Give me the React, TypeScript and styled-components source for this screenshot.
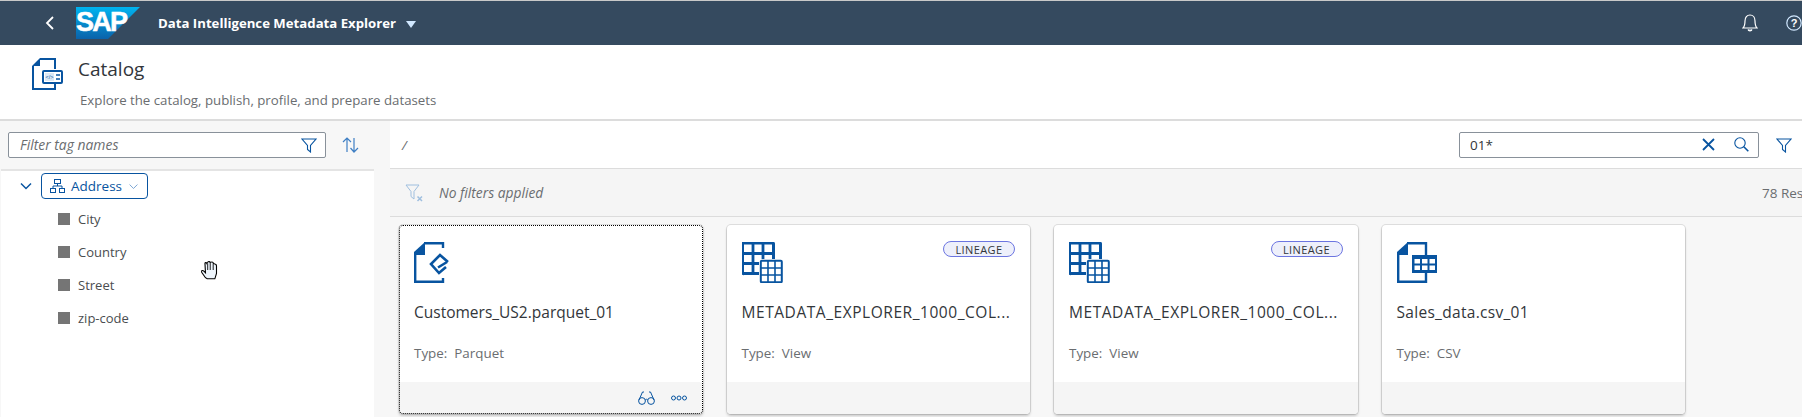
import React from 'react'
import styled, { createGlobalStyle } from 'styled-components'

const blue = '#0854a0'

const GlobalStyle = createGlobalStyle`
  html, body {
    margin: 0;
    padding: 0;
    background: #f7f7f7;
    overflow: hidden;
  }
  * {
    box-sizing: border-box;
  }
`

const Viewport = styled.div`
  width: 1802px;
  height: 417px;
  overflow: hidden;
  font-family: 'Open Sans', 'Noto Sans', sans-serif;
  color: #32363a;
  border-top: 1px solid #c9c9c9;
`
const Page = styled.div`
  width: 1880px;
  height: 416px;
  display: flex;
  flex-direction: column;
`
const ShellBar = styled.header`
  height: 44px;
  flex: none;
  background: #354a5f;
  display: flex;
  align-items: center;
  padding: 0 78px 0 43px;
  color: #fff;
`
const LogoSlot = styled.div`
  margin-left: 19px;
  width: 64px;
  height: 32px;
  flex: none;
  svg {
    display: block;
  }
`
const AppTitle = styled.div`
  margin-left: 18px;
  font-size: 13.2px;
  font-weight: 700;
  white-space: nowrap;
`
const Caret = styled.span`
  margin-left: 10px;
  margin-top: 2px;
  width: 0;
  height: 0;
  border-left: 5.5px solid transparent;
  border-right: 5.5px solid transparent;
  border-top: 7px solid #d1e8ff;
`
const ShellActions = styled.div`
  margin-left: auto;
  display: flex;
  align-items: center;
  gap: 28px;
`
const PageHeader = styled.section`
  height: 76px;
  flex: none;
  background: #fff;
  border-bottom: 2px solid #dcdcdc;
  display: flex;
  padding: 13px 0 0 32px;
`
const HeaderText = styled.div`
  margin-left: 15px;
  margin-top: -1px;
`
const PageTitle = styled.div`
  font-size: 19px;
  line-height: 24px;
  color: #32363a;
`
const PageSubtitle = styled.div`
  margin: 10px 0 0 2px;
  font-size: 13.25px;
  line-height: 18px;
  color: #6a6d70;
`
const Body = styled.div`
  flex: 1;
  min-height: 0;
  display: flex;
`
const Sidebar = styled.aside`
  width: 390px;
  flex: none;
  display: flex;
  flex-direction: column;
  background: #f7f7f7;
`
const SideTools = styled.div`
  height: 48px;
  flex: none;
  display: flex;
  align-items: center;
  padding: 0 0 0 8px;
`
const FieldBox = styled.div<{ $width: number }>`
  width: ${p => p.$width}px;
  height: 26px;
  background: #fff;
  border: 1px solid #89919a;
  border-radius: 2px;
  display: flex;
  align-items: center;
  font-size: 13.5px;
`
const Placeholder = styled.span`
  margin: -2px 0 0 11px;
  font-size: 13.9px;
  font-style: italic;
  color: #6a6d70;
  flex: 1;
`
const FieldValue = styled.span`
  margin-left: 10px;
  color: #32363a;
  flex: 1;
`
const FieldIcon = styled.span`
  display: flex;
  margin-right: 8px;
`
const TreePanel = styled.div`
  flex: 1;
  width: 373px;
  margin-left: 1px;
  background: #fff;
  border-top: 2px solid #e4e4e4;
  padding-top: 2px;
`
const TreeRoot = styled.div`
  display: flex;
  align-items: center;
  padding-left: 18px;
  gap: 8px;
  height: 26px;
`
const TagButton = styled.div`
  width: 107px;
  height: 26px;
  border: 1px solid ${blue};
  border-radius: 4px;
  display: flex;
  align-items: center;
  gap: 6px;
  padding-left: 8px;
  font-size: 13.5px;
  color: ${blue};
`
const TreeList = styled.ul`
  list-style: none;
  margin: 3px 0 0;
  padding: 0 0 0 57px;
`
const TreeItem = styled.li`
  height: 33px;
  display: flex;
  align-items: center;
  gap: 8px;
  font-size: 13px;
  color: #4a4d50;
`
const Swatch = styled.span`
  width: 12px;
  height: 12px;
  background: #757575;
`
const Main = styled.main`
  flex: 1;
  min-width: 0;
  display: flex;
  flex-direction: column;
`
const TopBar = styled.div`
  height: 48px;
  flex: none;
  background: #fff;
  border-bottom: 1px solid #dcdcdc;
  display: flex;
  align-items: center;
  padding-left: 12px;
  font-size: 13.5px;
  color: #6a6d70;
`
const Crumb = styled.span`
  flex: none;
  width: 1057px;
  font-style: italic;
`
const FilterAction = styled.span`
  margin-left: 17px;
  display: flex;
`
const FilterBar = styled.div`
  height: 48px;
  flex: none;
  border-bottom: 1px solid #dcdcdc;
  background: #f5f5f5;
  display: flex;
  align-items: center;
  padding-left: 15px;
  font-size: 13.5px;
  color: #6a6d70;
`
const FilterNote = styled.span`
  margin-left: 16px;
  width: 1323px;
  flex: none;
  font-size: 13.8px;
  font-style: italic;
`
const CardRow = styled.div`
  display: flex;
  gap: 24px;
  padding: 8px 0 0 9px;
`
const Card = styled.article<{ $focused?: boolean }>`
  width: 303.5px;
  height: 189px;
  flex: none;
  background: #fff;
  border-radius: 4px;
  box-shadow: 0 0 0 1px rgba(0, 0, 0, 0.1), 0 2px 3px rgba(0, 0, 0, 0.2);
  display: flex;
  flex-direction: column;
  overflow: hidden;
  outline: ${p => (p.$focused ? '1px dotted #000' : 'none')};
  outline-offset: ${p => (p.$focused ? '-1px' : '0')};
`
const CardBody = styled.div`
  flex: 1;
  padding: 17px 15px 0;
  position: relative;
`
const IconSlot = styled.div`
  height: 41px;
  svg {
    display: block;
  }
`
const Badge = styled.span`
  position: absolute;
  top: 16px;
  right: 15px;
  height: 16px;
  width: 72px;
  border: 1px solid #6c75e0;
  border-radius: 8px;
  background: #eef0fb;
  display: flex;
  align-items: center;
  justify-content: center;
  font-size: 11px;
  letter-spacing: 0.4px;
  color: #32363a;
`
const CardName = styled.div<{ $tracking: number }>`
  margin-top: 19px;
  font-size: 15.5px;
  line-height: 20px;
  letter-spacing: ${p => p.$tracking}px;
  white-space: nowrap;
  color: #32363a;
`
const CardType = styled.div`
  margin-top: 22px;
  font-size: 13.4px;
  line-height: 18px;
  color: #6a6d70;
  white-space: pre;
`
const CardFooter = styled.div`
  height: 32px;
  flex: none;
  background: #f5f5f5;
  display: flex;
  align-items: center;
  justify-content: flex-end;
  gap: 16px;
  padding-right: 16px;
`
const HandCursor = styled.svg`
  position: absolute;
  left: 200px;
  top: 259px;
`

const Chevron = ({ dir, color, size = 14, width = 1.5 }: { dir: 'left' | 'down'; color: string; size?: number; width?: number }) => (
  <svg width={size} height={size} viewBox="0 0 14 14" fill="none" stroke={color} strokeWidth={width}>
    <path d={dir === 'left' ? 'M10 1 L4 7 L10 13' : 'M2 4.5 L7 9.5 L12 4.5'} />
  </svg>
)

const FunnelIcon = ({ size = 16 }: { size?: number }) => (
  <svg width={size} height={size} viewBox="0 0 16 16" fill="none" stroke={blue} strokeWidth="1.1">
    <path d="M1 2 H15 L9.5 8.5 V15 L6.5 12.5 V8.5 Z" />
  </svg>
)

const BellIcon = () => (
  <svg width="16" height="18" viewBox="0 0 16 18" fill="none" stroke="#fff" strokeWidth="1.2">
    <path d="M1 14 C3 12 3 10 3 7 C3 3.5 5 1 8 1 C11 1 13 3.5 13 7 C13 10 13 12 15 14 Z" />
    <path d="M6 15.5 C6.5 17.3 9.5 17.3 10 15.5" fill="#d1e8ff" />
  </svg>
)

const HelpIcon = () => (
  <svg width="16" height="16" viewBox="0 0 16 16" fill="none">
    <circle cx="8" cy="8" r="7.2" stroke="#d1e8ff" strokeWidth="1.2" />
    <text x="8" y="12" textAnchor="middle" fontSize="11" fontWeight="700" fill="#fff" fontFamily="'Liberation Sans', sans-serif">?</text>
  </svg>
)

const SapLogo = () => (
  <svg width="64" height="32" viewBox="0 0 64 32">
    <defs>
      <linearGradient id="sapFill" x1="0" y1="0" x2="0" y2="1">
        <stop offset="0" stopColor="#00b4f0" />
        <stop offset="1" stopColor="#0a62aa" />
      </linearGradient>
    </defs>
    <polygon points="0,0 64,0 32,32 0,32" fill="url(#sapFill)" />
    <text x="0" y="24" fontSize="27" fontWeight="700" fill="#fff" letterSpacing="-1.8" fontFamily="'Liberation Sans', sans-serif" stroke="#fff" strokeWidth="0.5">SAP</text>
  </svg>
)

const CatalogIcon = () => (
  <svg width="31" height="33" viewBox="0 0 31 33" style={{ flex: 'none' }}>
    <path d="M8 1 H23 V11 M23 26 V31 H1 V8" fill="none" stroke={blue} strokeWidth="2" />
    <path d="M8 0 L0 8 H8 Z" fill={blue} />
    <rect x="11" y="13" width="19" height="12" rx="1" fill="#fff" stroke={blue} strokeWidth="2" />
    <rect x="13" y="15" width="9" height="8" fill="#dbe8f5" />
    <text x="17.5" y="21" textAnchor="middle" fontSize="5.5" fill={blue} fontFamily="'Liberation Sans', sans-serif">&lt;/&gt;</text>
    <path d="M24 17 H28 M24 21 H28" stroke={blue} strokeWidth="1.6" />
  </svg>
)

const ParquetIcon = () => (
  <svg width="36" height="41" viewBox="0 0 36 41">
    <path d="M10 1.2 H29 V6 M29 36 V39.8 H1.2 V10" fill="none" stroke={blue} strokeWidth="2.4" />
    <path d="M11 0 L0 10 V13 H11 Z" fill={blue} />
    <path d="M34 20 L26 13 L17 22 L25 31 L32 25 M33 20 L24 25.5" fill="none" stroke={blue} strokeWidth="2.6" />
  </svg>
)

const TableIcon = () => (
  <svg width="41" height="41" viewBox="0 0 41 41" fill="none" stroke={blue}>
    <path d="M17 31.5 H2 a1 1 0 0 1 -1.5 -1 V2 a1 1 0 0 1 1.5 -1 H30 a1 1 0 0 1 1.5 1 V17" strokeWidth="3" />
    <path d="M1 11.5 H31 M1 21.5 H17 M11 1 V32 M21 1 V17" strokeWidth="2.8" />
    <rect x="18.8" y="18.8" width="21" height="21.4" rx="1" fill="#fff" strokeWidth="2" />
    <path d="M19 26 H40 M19 33 H40 M26 19 V40 M33 19 V40" strokeWidth="1.6" />
  </svg>
)

const CsvIcon = () => (
  <svg width="41" height="41" viewBox="0 0 41 41">
    <path d="M10 1.2 H29 V13 M29 31 V39.8 H1.2 V10" fill="none" stroke={blue} strokeWidth="2.4" />
    <path d="M11 0 L0 10 V13 H11 Z" fill={blue} />
    <rect x="15" y="13" width="25" height="18" fill={blue} />
    <path d="M17.5 17 h5.5 v4.5 h-5.5 z M25 17 h5.5 v4.5 h-5.5 z M32.5 17 h5.5 v4.5 h-5.5 z M17.5 23.5 h5.5 v4.5 h-5.5 z M25 23.5 h5.5 v4.5 h-5.5 z M32.5 23.5 h5.5 v4.5 h-5.5 z" fill="#fff" />
  </svg>
)

const SortIcon = () => (
  <svg width="17" height="16" viewBox="0 0 17 16" fill="none" stroke="#3f7fc4" strokeWidth="1.2" style={{ marginLeft: 16 }}>
    <path d="M5 15 V1 M1 5 L5 1 L9 5" />
    <path d="M12 1 V15 M8.5 11 L12 15 L16 11" />
  </svg>
)

const HierarchyIcon = () => (
  <svg width="15" height="14" viewBox="0 0 15 14" fill="none" stroke={blue} strokeWidth="1">
    <rect x="4.5" y="0.5" width="6" height="4" />
    <rect x="0.5" y="9.5" width="5" height="4" />
    <rect x="9.5" y="9.5" width="5" height="4" />
    <path d="M7.5 4.5 V7 M3 9.5 V7 H12 V9.5" />
  </svg>
)

const ClearIcon = () => (
  <svg width="13" height="13" viewBox="0 0 13 13" fill="none" stroke={blue} strokeWidth="1.8" style={{ marginRight: 19 }}>
    <path d="M1 1 L12 12 M12 1 L1 12" />
  </svg>
)

const SearchIcon = () => (
  <svg width="15" height="15" viewBox="0 0 15 15" fill="none" stroke={blue} strokeWidth="1.1" style={{ marginRight: 9 }}>
    <circle cx="6" cy="6" r="5.2" />
    <path d="M9.8 9.8 L14.3 14.3" strokeWidth="1.6" />
  </svg>
)

const NoFilterIcon = () => (
  <svg width="18" height="18" viewBox="0 0 18 18" fill="none" stroke="#9fbfdf" strokeWidth="1">
    <path d="M1 1 H14 L9 7.5 V15 L6 12.5 V7.5 Z" />
    <path d="M12.5 12.5 L17 17 M17 12.5 L12.5 17" strokeWidth="1.5" />
  </svg>
)

const GlassesIcon = () => (
  <svg width="17" height="14" viewBox="0 0 17 14" fill="none" stroke={blue} strokeWidth="1">
    <circle cx="4" cy="10" r="3.4" />
    <circle cx="13" cy="10" r="3.4" />
    <path d="M7.2 9 C8 8 9 8 9.8 9 M1 9 L4.5 1 H6 M16 9 L12.5 1 H11" />
  </svg>
)

const MoreIcon = () => (
  <svg width="16" height="6" viewBox="0 0 16 6" fill="none" stroke={blue} strokeWidth="1">
    <circle cx="2.5" cy="3" r="2" />
    <circle cx="8" cy="3" r="2" />
    <circle cx="13.5" cy="3" r="2" />
  </svg>
)

const tags = ['City', 'Country', 'Street', 'zip-code']

interface Dataset {
  id: number
  name: string
  type: string
  icon: React.ReactNode
  tracking: number
  lineage?: boolean
  focused?: boolean
}

const datasets: Dataset[] = [
  { id: 1, name: 'Customers_US2.parquet_01', type: 'Parquet', icon: <ParquetIcon />, tracking: 0, focused: true },
  { id: 2, name: 'METADATA_EXPLORER_1000_COL...', type: 'View', icon: <TableIcon />, tracking: 0.55, lineage: true },
  { id: 3, name: 'METADATA_EXPLORER_1000_COL...', type: 'View', icon: <TableIcon />, tracking: 0.55, lineage: true },
  { id: 4, name: 'Sales_data.csv_01', type: 'CSV', icon: <CsvIcon />, tracking: 0.3 },
]

export default function App() {
  return (
    <Viewport>
      <GlobalStyle />
      <Page>
        <ShellBar>
          <Chevron dir="left" color="#fff" size={14} width={1.8} />
          <LogoSlot>
            <SapLogo />
          </LogoSlot>
          <AppTitle>Data Intelligence Metadata Explorer</AppTitle>
          <Caret />
          <ShellActions>
            <BellIcon />
            <HelpIcon />
          </ShellActions>
        </ShellBar>
        <PageHeader>
          <CatalogIcon />
          <HeaderText>
            <PageTitle>Catalog</PageTitle>
            <PageSubtitle>Explore the catalog, publish, profile, and prepare datasets</PageSubtitle>
          </HeaderText>
        </PageHeader>
        <Body>
          <Sidebar>
            <SideTools>
              <FieldBox $width={318}>
                <Placeholder>Filter tag names</Placeholder>
                <FieldIcon>
                  <FunnelIcon />
                </FieldIcon>
              </FieldBox>
              <SortIcon />
            </SideTools>
            <TreePanel>
              <TreeRoot>
                <Chevron dir="down" color={blue} size={14} />
                <TagButton>
                  <HierarchyIcon />
                  Address
                  <Chevron dir="down" color="#5a8fc8" size={11} width={1} />
                </TagButton>
              </TreeRoot>
              <TreeList>
                {tags.map(tag => (
                  <TreeItem key={tag}>
                    <Swatch />
                    {tag}
                  </TreeItem>
                ))}
              </TreeList>
            </TreePanel>
          </Sidebar>
          <Main>
            <TopBar>
              <Crumb>/</Crumb>
              <FieldBox $width={300}>
                <FieldValue>01*</FieldValue>
                <ClearIcon />
                <SearchIcon />
              </FieldBox>
              <FilterAction>
                <FunnelIcon />
              </FilterAction>
            </TopBar>
            <FilterBar>
              <NoFilterIcon />
              <FilterNote>No filters applied</FilterNote>
              <span>78 Results</span>
            </FilterBar>
            <CardRow>
              {datasets.map(item => (
                <Card key={item.id} $focused={item.focused}>
                  <CardBody>
                    <IconSlot>{item.icon}</IconSlot>
                    {item.lineage && <Badge>LINEAGE</Badge>}
                    <CardName $tracking={item.tracking}>{item.name}</CardName>
                    <CardType>{`Type:  ${item.type}`}</CardType>
                  </CardBody>
                  <CardFooter>
                    {item.focused && (
                      <>
                        <GlassesIcon />
                        <MoreIcon />
                      </>
                    )}
                  </CardFooter>
                </Card>
              ))}
            </CardRow>
          </Main>
        </Body>
      </Page>
      <HandCursor width="22" height="22" viewBox="0 0 20 20">
        <path
          d="M5 17 L1.5 12 C1 10.5 2.5 10 3.5 11 L5 12.5 L4.5 4 C4.5 3 6 3 6.2 4 L7 3 C7.5 2 9 2 9.2 3 L10.5 2.8 C11.5 2.5 12.2 3.5 12.2 4 L13.5 4.5 C14.5 4.5 15 5.5 15 6.5 L15 13 L13.5 18 H6.5 Z"
          fill="#eef5fc"
          stroke="#000"
          strokeWidth="1"
        />
        <path d="M7 4 V10 M9.3 3 V10 M12 4 V10" stroke="#000" strokeWidth="0.8" />
      </HandCursor>
    </Viewport>
  )
}
